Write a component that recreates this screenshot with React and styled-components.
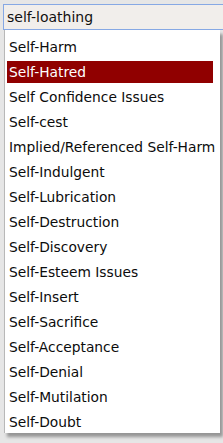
import React from "react";
import styled, { createGlobalStyle } from "styled-components";

const Global = createGlobalStyle`
  html, body {
    margin: 0;
    padding: 0;
    background: #e6e6e6;
  }
  body {
    font-family: "DejaVu Sans", Verdana, sans-serif;
  }
`;

const Page = styled.div`
  padding: 4px 0 0 3px;
  height: 443px;
  box-sizing: border-box;
  overflow: hidden;
`;

const Input = styled.div`
  height: 24px;
  border: 1px solid #86a8e4;
  border-right: none;
  background: #f1eeeb;
  color: #111;
  font-size: 14px;
  line-height: 24px;
  padding-left: 3px;
`;

const Menu = styled.ul`
  list-style: none;
  margin: 0 0 0 1px;
  padding: 6px 7px 0 2px;
  width: 206px;
  background: #fff;
  border-left: 1px solid #b8b8b8;
  box-shadow: 3px 4px 3px rgba(0, 0, 0, 0.35);
`;

const Item = styled.li`
  height: 22px;
  line-height: 22px;
  margin-bottom: 3px;
  padding-left: 2px;
  font-size: 13.8px;
  white-space: nowrap;
  color: ${({ active }) => (active ? "#fff" : "#0c0c0c")};
  background: ${({ active }) => (active ? "#900000" : "transparent")};
`;

const items = [
  "Self-Harm",
  "Self-Hatred",
  "Self Confidence Issues",
  "Self-cest",
  "Implied/Referenced Self-Harm",
  "Self-Indulgent",
  "Self-Lubrication",
  "Self-Destruction",
  "Self-Discovery",
  "Self-Esteem Issues",
  "Self-Insert",
  "Self-Sacrifice",
  "Self-Acceptance",
  "Self-Denial",
  "Self-Mutilation",
  "Self-Doubt",
];

export default function App() {
  return (
    <Page>
      <Global />
      <Input>self-loathing</Input>
      <Menu>
        {items.map((t) => (
          <Item key={t} active={t === "Self-Hatred"}>
            {t}
          </Item>
        ))}
      </Menu>
    </Page>
  );
}
